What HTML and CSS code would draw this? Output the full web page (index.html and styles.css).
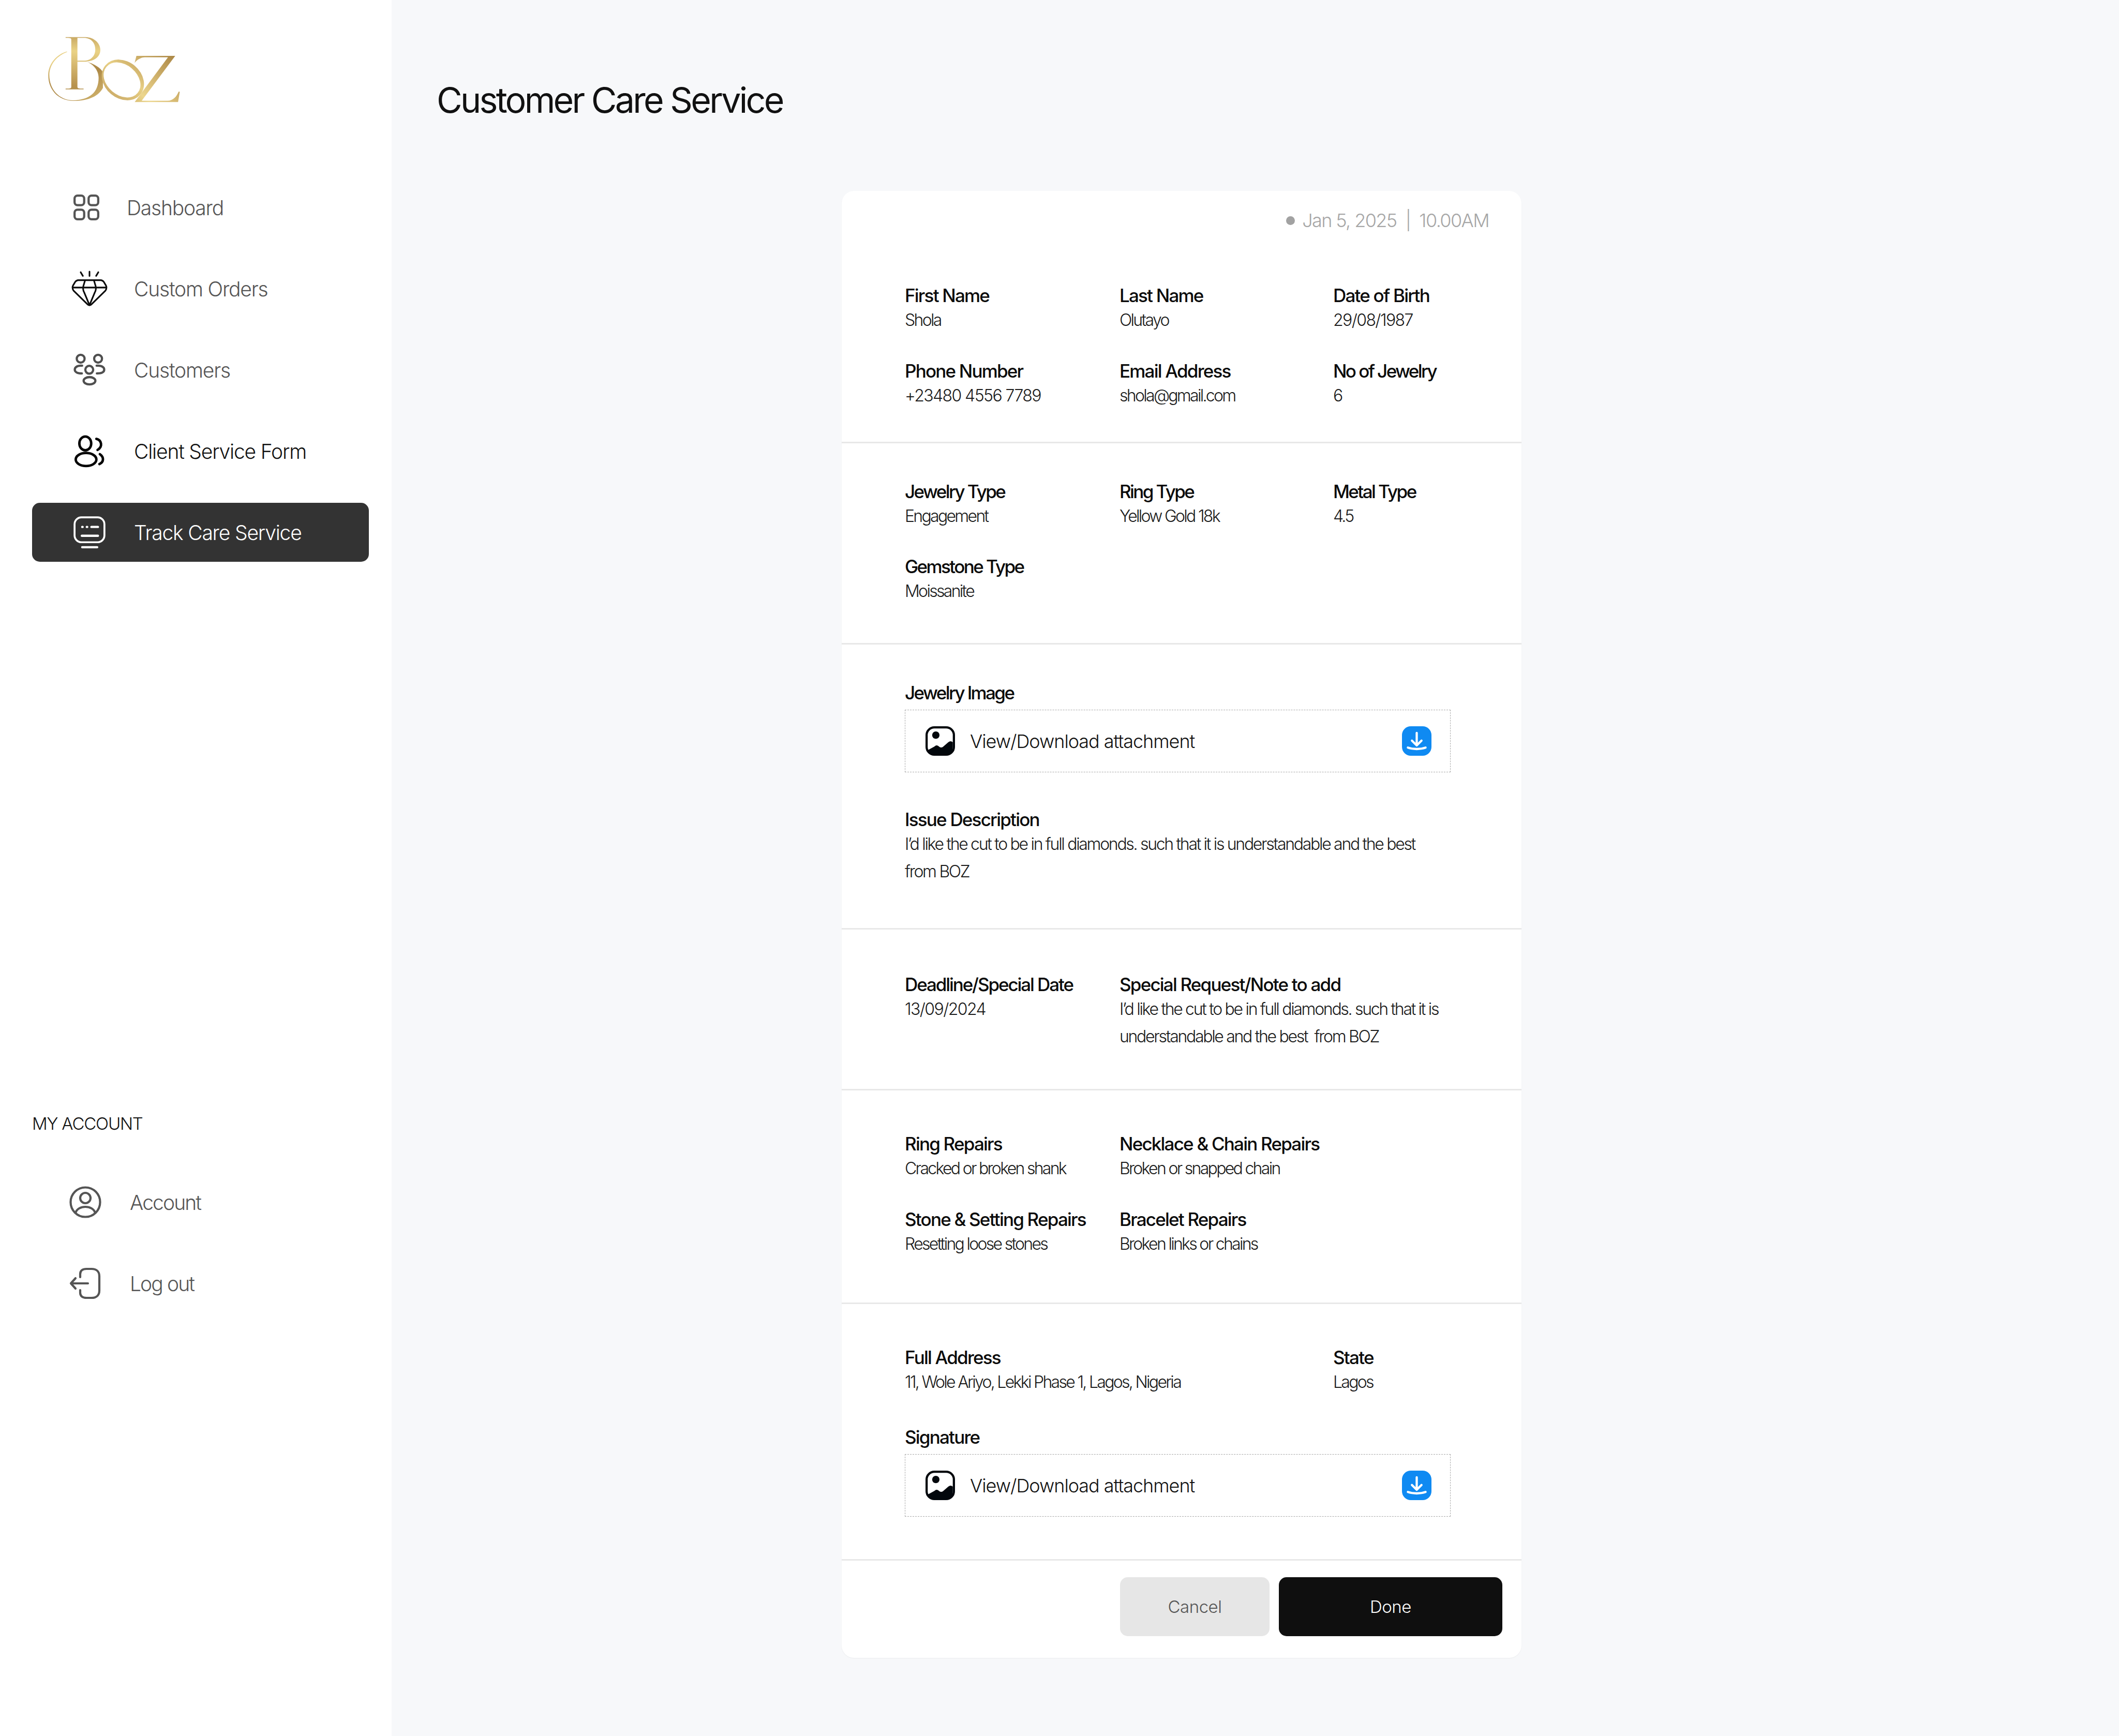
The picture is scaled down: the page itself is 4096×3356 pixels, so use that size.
FILE: index.html
```html
<!DOCTYPE html>
<html lang="en">
<head>
<meta charset="utf-8">
<title>Customer Care Service</title>
<link rel="stylesheet" href="styles.css">
</head>
<body>
<div class="app">
  <aside class="sidebar">
    <svg class="logo" viewBox="95 118 1071 532" role="img" aria-label="BOZ">
      <defs>
        <linearGradient id="gb" gradientUnits="userSpaceOnUse" x1="300" y1="120" x2="300" y2="640">
          <stop offset="0" stop-color="#c9a964"/><stop offset=".22" stop-color="#ead285"/><stop offset=".75" stop-color="#b8934f"/><stop offset="1" stop-color="#ad8a48"/>
        </linearGradient>
        <linearGradient id="gs" gradientUnits="userSpaceOnUse" x1="250" y1="240" x2="540" y2="640">
          <stop offset="0" stop-color="#e8d085"/><stop offset=".25" stop-color="#b28e4c"/><stop offset=".55" stop-color="#ae8a48"/><stop offset="1" stop-color="#d8bc74"/>
        </linearGradient>
        <linearGradient id="gz" gradientUnits="userSpaceOnUse" x1="1120" y1="270" x2="780" y2="660">
          <stop offset="0" stop-color="#ab8745"/><stop offset=".55" stop-color="#d9bd76"/><stop offset=".8" stop-color="#ecd68d"/><stop offset="1" stop-color="#d5b970"/>
        </linearGradient>
        <linearGradient id="go" gradientUnits="userSpaceOnUse" x1="560" y1="640" x2="840" y2="300">
          <stop offset="0" stop-color="#c4a260"/><stop offset=".6" stop-color="#e8d085"/><stop offset="1" stop-color="#c2a05c"/>
        </linearGradient>
      </defs>
      <path fill="url(#gs)" d="M400 319C470 335 525 375 540 405V533C505 600 420 640 300 638C170 636 96 540 96 430C96 340 160 262 248 237L249 241C170 270 105 340 105 430C105 540 180 632 300 634C430 630 505 570 505 450C505 390 460 335 400 319Z"/>
      <path fill="url(#gb)" d="M237 120H400C470 122 519 170 519 225C519 275 478 306 428 316L400 320H333V525C333 538 345 539 383 538V545H237V538C275 539 283 538 283 525V140C283 127 270 127 237 127ZM333 127V312H385C440 312 478 275 478 220C478 165 440 126 385 127Z" fill-rule="evenodd"/>
      <path fill="url(#go)" fill-rule="evenodd" d="M560.3 349A185 150 40 1 1 843.7 587A185 150 40 1 1 560.3 349ZM568.6 362A165 120 40 1 0 821.4 574A165 120 40 1 0 568.6 362Z"/>
      <path fill="url(#gz)" d="M812 273H1127L855 637H1065C1110 637 1140 600 1155 562L1164 565L1150 648H798L1068 284H880C850 284 815 305 797 330Z"/>
    </svg>
    <nav class="nav">
      <a class="nav-item">
        <svg class="ic ic-dash" viewBox="0 0 70 70" fill="none" stroke="#555" stroke-width="6"><rect x="3" y="3" width="26" height="26" rx="8"/><rect x="41" y="3" width="26" height="26" rx="8"/><rect x="3" y="41" width="26" height="26" rx="8"/><rect x="41" y="41" width="26" height="26" rx="8"/></svg>
        <span>Dashboard</span>
      </a>
      <a class="nav-item">
        <svg class="ic" viewBox="66 50 312 312" fill="none" stroke="#0a0a0a" stroke-width="13" stroke-linecap="round" stroke-linejoin="round"><path d="M222 67V103M150 72L168 102M294 72L276 102"/><path d="M130 137H314C325 137 331 142 338 150L356 180C362 190 362 210 352 222L242 330C230 344 214 344 202 330L92 222C82 210 82 190 88 180L106 150C113 142 119 137 130 137Z"/><path d="M84 197H360M186 138L172 185C167 205 170 220 178 235L222 340L266 235C274 220 277 205 272 185L258 138"/></svg>
        <span>Custom Orders</span>
      </a>
      <a class="nav-item">
        <svg class="ic" viewBox="66 50 312 312" fill="none" stroke="#4f4f4f" stroke-width="18" stroke-linecap="round"><circle cx="150" cy="115" r="32"/><circle cx="292" cy="115" r="32"/><circle cx="220" cy="205" r="32"/><ellipse cx="222" cy="295" rx="48" ry="30"/><path d="M162 172H150C118 172 102 188 102 204C102 220 118 235 160 235M280 172H292C326 172 342 188 342 204C342 220 326 235 282 235"/></svg>
        <span>Customers</span>
      </a>
      <a class="nav-item nav-strong">
        <svg class="ic" viewBox="0 0 100 100" fill="none" stroke="#050505" stroke-width="6.5" stroke-linecap="round"><ellipse cx="39" cy="30" rx="15.5" ry="18"/><ellipse cx="41" cy="72" rx="27" ry="17"/><path d="M68 18C81 21 86 38 71 47M77 58C88 66 88 78 76 84"/></svg>
        <span>Client Service Form</span>
      </a>
      <a class="nav-item nav-active">
        <svg class="ic" viewBox="0 0 100 100" fill="none" stroke="#fff" stroke-linecap="round"><rect x="11" y="11" width="78" height="65" rx="18" stroke-width="5"/><path d="M31 36H32M43 36H44M55 36H72M30 59H72M31 89H70" stroke-width="6"/></svg>
        <span>Track Care Service</span>
      </a>
    </nav>
    <h2 class="side-title">MY ACCOUNT</h2>
    <nav class="nav-account">
      <a class="nav-item acc-item">
        <svg class="ic-acc" viewBox="0 0 62 62" fill="none" stroke="#555" stroke-width="4.2"><circle cx="31" cy="31" r="28.5"/><circle cx="31" cy="23" r="10"/><path d="M12 52C16 36 46 36 50 52"/></svg>
        <span>Account</span>
      </a>
      <a class="nav-item acc-item">
        <svg class="ic-acc" viewBox="0 0 62 62" fill="none" stroke="#555" stroke-width="4.2" stroke-linecap="round" stroke-linejoin="round"><path d="M21 19V13C21 6 26 3 33 3H43C52 3 58 8 58 17V45C58 54 52 59 43 59H33C26 59 21 56 21 49V44"/><path d="M36 31H3M12 21L3 31L12 41"/></svg>
        <span>Log out</span>
      </a>
    </nav>
  </aside>

  <main class="main">
    <h1 class="title">Customer Care Service</h1>
    <section class="card">
      <div class="date"><i class="dot"></i>Jan 5, 2025 &nbsp;|&nbsp; 10.00AM</div>

      <div class="sec sec-a grid">
        <div class="f"><b>First Name</b><p>Shola</p></div>
        <div class="f"><b>Last Name</b><p>Olutayo</p></div>
        <div class="f"><b>Date of Birth</b><p class="num">29/08/1987</p></div>
        <div class="f"><b>Phone Number</b><p class="num">+23480 4556 7789</p></div>
        <div class="f"><b>Email Address</b><p>shola@gmail.com</p></div>
        <div class="f"><b class="tight">No of Jewelry</b><p>6</p></div>
      </div>

      <div class="sec sec-b grid">
        <div class="f"><b class="tight">Jewelry Type</b><p>Engagement</p></div>
        <div class="f"><b class="tight">Ring Type</b><p>Yellow Gold 18k</p></div>
        <div class="f"><b class="tight">Metal Type</b><p>4.5</p></div>
        <div class="f"><b class="tight">Gemstone Type</b><p>Moissanite</p></div>
      </div>

      <div class="sec sec-c">
        <div class="f"><b class="tight">Jewelry Image</b>
          <div class="attach">
            <svg class="att-ic" viewBox="0 0 80 80"><rect x="3" y="3" width="74" height="74" rx="21" fill="#fff" stroke="#02070c" stroke-width="6"/><circle cx="28" cy="24" r="10" fill="#02070c"/><path d="M6 65L24 55C30 50 33 52 38 56C41 58 44 58 47 56L62 43C66 40 70 40 74 43V57C74 70 68 75 56 75H24C14 75 6 72 6 65Z" fill="#02070c"/></svg>
            <span>View/Download attachment</span>
            <svg class="att-ic att-dl" viewBox="0 0 80 80"><rect width="80" height="80" rx="24" fill="#0f8af2"/><path d="M40 18V52M27 39L40 52L53 39M16 58C30 63 50 63 64 58" fill="none" stroke="#fff" stroke-width="6" stroke-linecap="round" stroke-linejoin="round"/></svg>
          </div>
        </div>
        <div class="f f-issue"><b>Issue Description</b><p class="long">I’d like the cut to be in full diamonds. such that it is understandable and the best<br>from BOZ</p></div>
      </div>

      <div class="sec sec-d grid">
        <div class="f"><b class="tight-s">Deadline/Special Date</b><p class="num">13/09/2024</p></div>
        <div class="f f-span"><b>Special Request/Note to add</b><p class="long">I’d like the cut to be in full diamonds. such that it is<br>understandable and the best&nbsp; from BOZ</p></div>
      </div>

      <div class="sec sec-e grid">
        <div class="f"><b>Ring Repairs</b><p>Cracked or broken shank</p></div>
        <div class="f f-span"><b>Necklace &amp; Chain Repairs</b><p>Broken or snapped chain</p></div>
        <div class="f"><b>Stone &amp; Setting Repairs</b><p>Resetting loose stones</p></div>
        <div class="f f-span"><b>Bracelet Repairs</b><p>Broken links or chains</p></div>
      </div>

      <div class="sec sec-f">
        <div class="grid">
          <div class="f f-span"><b>Full Address</b><p>11, Wole Ariyo, Lekki Phase 1, Lagos, Nigeria</p></div>
          <div class="f"><b>State</b><p>Lagos</p></div>
        </div>
        <div class="f f-sign"><b>Signature</b>
          <div class="attach">
            <svg class="att-ic" viewBox="0 0 80 80"><rect x="3" y="3" width="74" height="74" rx="21" fill="#fff" stroke="#02070c" stroke-width="6"/><circle cx="28" cy="24" r="10" fill="#02070c"/><path d="M6 65L24 55C30 50 33 52 38 56C41 58 44 58 47 56L62 43C66 40 70 40 74 43V57C74 70 68 75 56 75H24C14 75 6 72 6 65Z" fill="#02070c"/></svg>
            <span>View/Download attachment</span>
            <svg class="att-ic att-dl" viewBox="0 0 80 80"><rect width="80" height="80" rx="24" fill="#0f8af2"/><path d="M40 18V52M27 39L40 52L53 39M16 58C30 63 50 63 64 58" fill="none" stroke="#fff" stroke-width="6" stroke-linecap="round" stroke-linejoin="round"/></svg>
          </div>
        </div>
      </div>

      <div class="actions">
        <button class="btn btn-cancel">Cancel</button>
        <button class="btn btn-done">Done</button>
      </div>
    </section>
  </main>
</div>
</body>
</html>
```
FILE: styles.css
```css
* { box-sizing: border-box; margin: 0; padding: 0; }
html, body { width: 4096px; height: 3356px; overflow: hidden; }
body { font-family: Inter, "Liberation Sans", sans-serif; background: #f7f8fa; color: #0d0d0d; }
.app { display: flex; width: 4096px; height: 3356px; }

.sidebar { width: 757px; flex: none; height: 100%; background: #fff; padding: 71px 44px 0 62px; }
.logo { display: block; width: 255px; height: 127px; margin-left: 31px; }
.nav { margin-top: 146px; display: flex; flex-direction: column; }
.nav-item { display: flex; align-items: center; height: 114px; margin-bottom: 43px; padding-left: 74px; font-size: 39px; font-weight: 300; letter-spacing: -1.2px; color: #555; }
.nav-item:last-child { margin-bottom: 0; }
.ic { width: 74px; height: 74px; flex: none; margin-right: 49px; }
.ic-dash { width: 50px; height: 50px; margin: 0 53px 0 6px; }
.nav-strong { color: #111; }
.nav-active { background: #333; color: #fff; border-radius: 15px; }
.side-title { margin-top: 1064px; font-size: 33px; font-weight: 300; color: #111; letter-spacing: -1.2px; line-height: 44px; }
.nav-account { margin-top: 73px; margin-left: 10px; }
.acc-item { padding-left: 62px; letter-spacing: -1.9px; }
.ic-acc { width: 62px; height: 62px; flex: none; margin-right: 55px; }

.main { flex: 1; padding: 0 0 0 87px; }
.title { font-size: 68px; font-weight: 400; letter-spacing: -3.7px; line-height: 90px; margin-top: 148px; color: #111; }
.card { width: 1314px; margin: 131px 0 0 783px; background: #fff; border-radius: 24px; box-shadow: 0 1px 2px rgba(0,0,0,.05); }
.date { display: flex; align-items: center; justify-content: flex-end; height: 114px; padding-right: 63px; font-size: 36px; font-weight: 300; color: #a6a6a6; letter-spacing: -1.6px; white-space: pre; }
.dot { width: 17px; height: 17px; border-radius: 50%; background: #a2a2a2; margin-right: 14px; }

.sec { padding: 0 122px; border-bottom: 3px solid #e8e8e8; }
.grid { display: grid; grid-template-columns: 415px 413px 1fr; }
.f-span { grid-column: span 2; }
.f b { display: block; font-size: 35px; line-height: 47px; font-weight: 500; letter-spacing: -1.8px; color: #0b0b0b; white-space: nowrap; }
.f b.tight { letter-spacing: -2.6px; }
.f b.tight-s { letter-spacing: -2.1px; }
.f p { font-size: 32px; line-height: 47px; font-weight: 300; letter-spacing: -2.7px; color: #1a1a1a; white-space: nowrap; }
.f p.num { letter-spacing: -1.6px; }
.f p.long { line-height: 53px; margin-top: -3px; letter-spacing: -2.3px; }
.sec-a { height: 374px; padding-top: 65px; row-gap: 52px; align-content: start; }
.sec-b { height: 389px; padding-top: 70px; row-gap: 51px; align-content: start; }
.sec-c { height: 551px; padding-top: 70px; padding-right: 0; }
.sec-d { height: 311px; padding-top: 83px; align-content: start; }
.sec-e { height: 413px; padding-top: 80px; row-gap: 52px; align-content: start; }
.sec-f { height: 496px; padding-top: 80px; padding-right: 0; }
.attach { display: flex; align-items: center; width: 1055px; height: 121px; margin-top: 9px; padding: 0 36px 0 39px; border: 1px dashed #a8a8a8; font-size: 36px; font-weight: 300; letter-spacing: -1.05px; color: #111; }
.att-ic { width: 57px; height: 57px; flex: none; margin-right: 29px; }
.att-dl { margin: 0 0 0 auto; }
.f-issue { margin-top: 68px; }
.f-sign { margin-top: 60px; }

.actions { display: flex; justify-content: flex-end; gap: 18px; height: 188px; padding: 32px 37px 0 0; }
.btn { height: 114px; border: 0; border-radius: 15px; font-family: inherit; font-size: 33px; font-weight: 300; letter-spacing: -0.5px; }
.btn-cancel { width: 289px; background: #e6e6e6; color: #555; }
.btn-done { width: 432px; background: #0f0f0f; color: #fff; }
```
